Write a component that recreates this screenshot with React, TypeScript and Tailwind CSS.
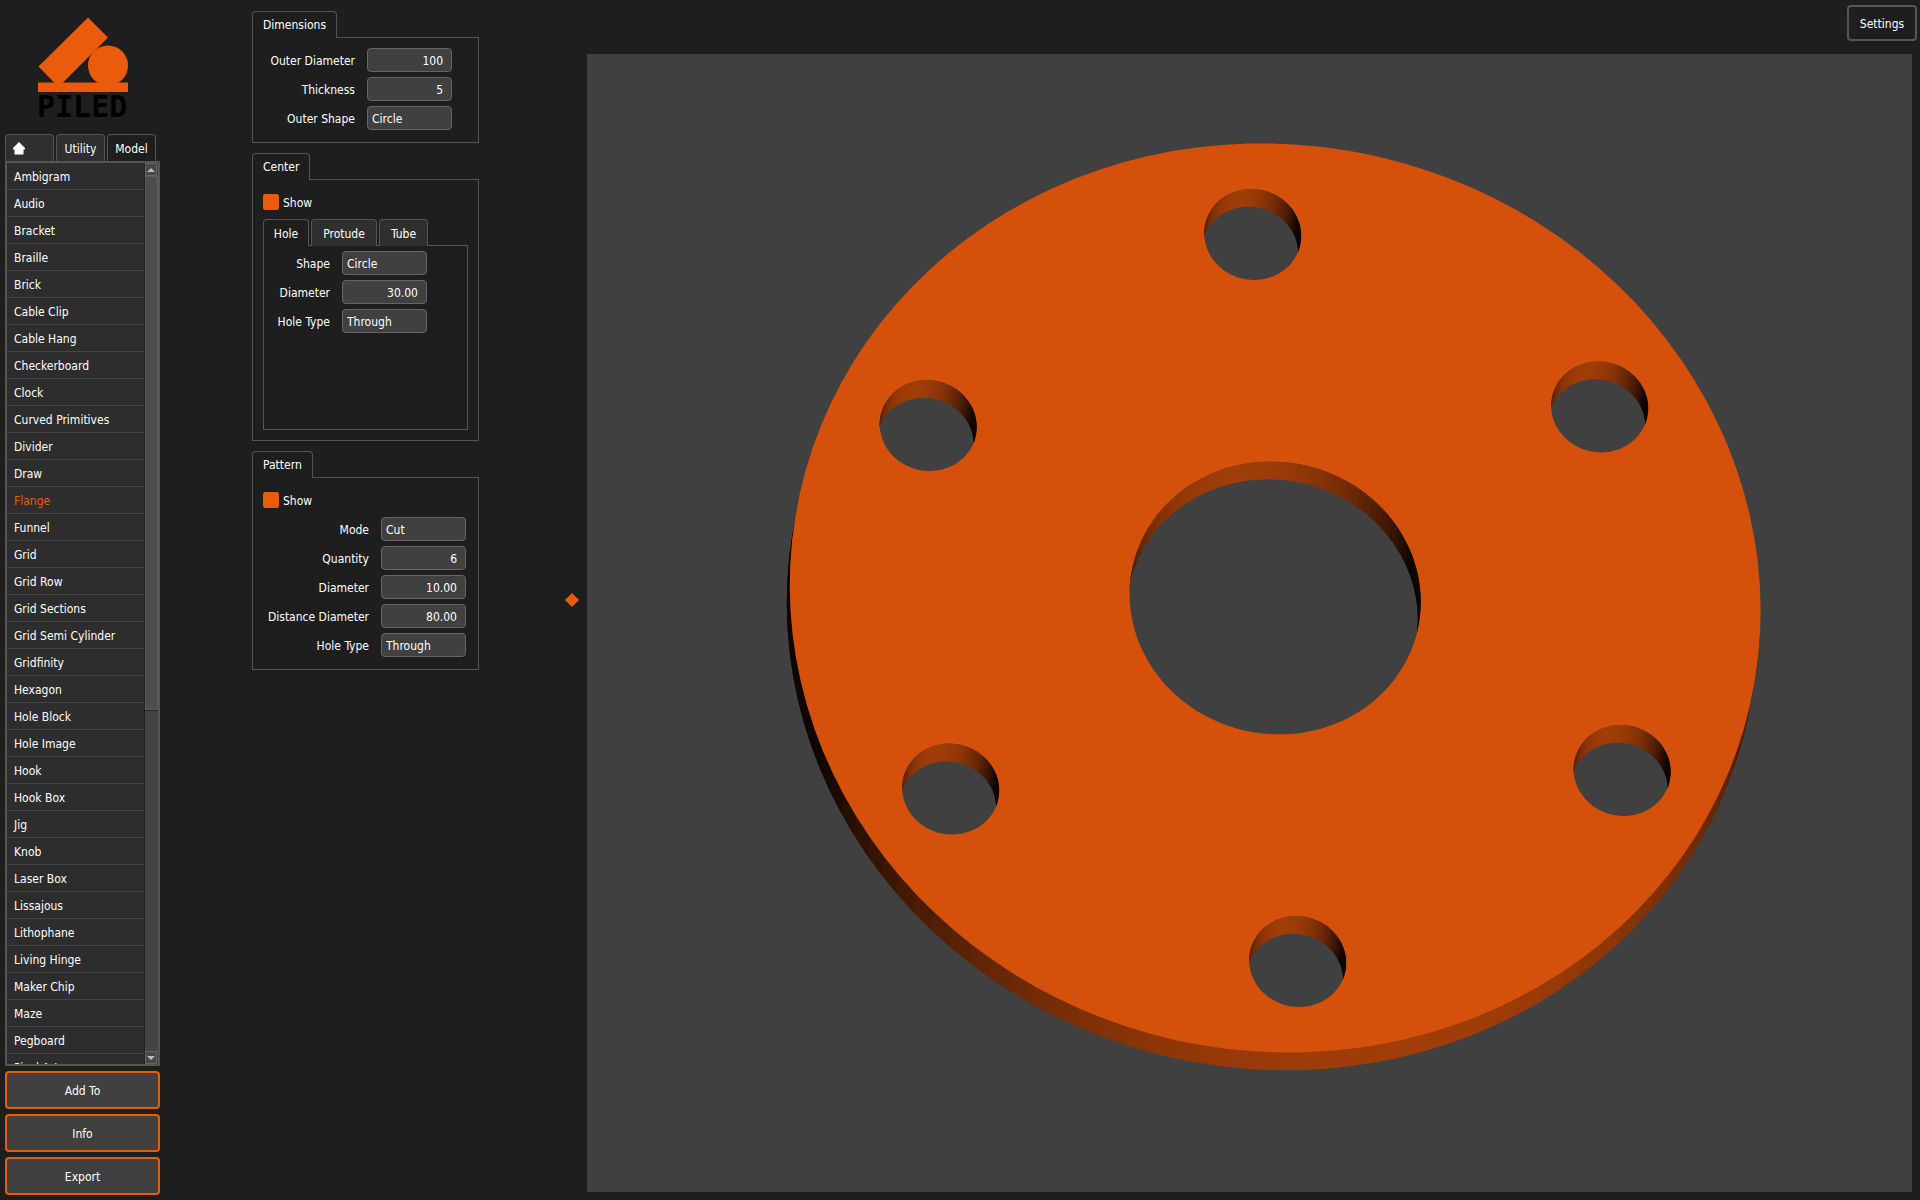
import { useId, useState } from "react";
import type { ReactNode } from "react";

const MODELS = [
    "Ambigram", "Audio", "Bracket", "Braille", "Brick", "Cable Clip", "Cable Hang",
    "Checkerboard", "Clock", "Curved Primitives", "Divider", "Draw", "Flange", "Funnel",
    "Grid", "Grid Row", "Grid Sections", "Grid Semi Cylinder", "Gridfinity", "Hexagon",
    "Hole Block", "Hole Image", "Hook", "Hook Box", "Jig", "Knob", "Laser Box",
    "Lissajous", "Lithophane", "Living Hinge", "Maker Chip", "Maze", "Pegboard", "Pixel Art",
];

// Flange geometry, in model units
const OUTER_RADIUS = 50;
const CENTER_RADIUS = 15;
const BOLT_RADIUS = 5;
const BOLT_DISTANCE = 40;
const SEGMENTS = 120;

type Point = [number, number];

// y points down the screen, depth 1 is the back face
function project(x: number, y: number, depth = 0): Point {
    return [
        688.2 + 9.692 * x + 0.562 * y - 3 * depth,
        544 - 0.268 * x + 9.088 * y + 17.6 * depth,
    ];
}

function toPoints(points: Point[]) {
    return points.map(([x, y]) => `${x.toFixed(2)},${y.toFixed(2)}`).join(" ");
}

function circlePoints(cx: number, cy: number, r: number) {
    return Array.from({ length: SEGMENTS }, (_, i) => {
        const a = (i / SEGMENTS) * Math.PI * 2;
        return project(cx + r * Math.cos(a), cy + r * Math.sin(a));
    });
}

function shade(nx: number, ny: number) {
    const light = Math.max(0.1, nx * 0.208 + ny * 0.978);
    return `rgb(${Math.round(160 * light)}, ${Math.round(61 * light)}, ${Math.round(8 * light)})`;
}

function Wall({ cx, cy, r, inward }: { cx: number; cy: number; r: number; inward?: boolean }) {
    const side = inward ? -1 : 1;

    const at = (step: number, depth: number) => {
        const a = (step / SEGMENTS) * Math.PI * 2;
        return project(cx + r * Math.cos(a), cy + r * Math.sin(a), depth);
    };

    return (
        <>
            {Array.from({ length: SEGMENTS }, (_, i) => {
                const mid = ((i + 0.5) / SEGMENTS) * Math.PI * 2;
                const color = shade(side * Math.cos(mid), side * Math.sin(mid));
                // back of the wall, turned away from the camera
                if (side * (Math.sin(mid) * 17.6 - Math.cos(mid) * 3) < -1) return null;
                // each facet runs under the next one, so no seam shows between them
                return (
                    <polygon
                        key={i}
                        points={toPoints([at(i, 0), at(i + 1, 0), at(i + 2, 0), at(i + 2, 1), at(i + 1, 1), at(i, 1)])}
                        fill={color}
                    />
                );
            })}
        </>
    );
}

function Hole({ cx, cy, r }: { cx: number; cy: number; r: number }) {
    const id = useId();
    const outline = toPoints(circlePoints(cx, cy, r));
    return (
        <>
            <clipPath id={id}>
                <polygon points={outline} />
            </clipPath>
            <polygon points={outline} fill="#404040" />
            <g clipPath={`url(#${id})`}>
                <Wall cx={cx} cy={cy} r={r} inward />
            </g>
        </>
    );
}

function Flange({ quantity }: { quantity: number }) {
    const bolts = Array.from({ length: quantity }, (_, i) => {
        const a = (i / quantity) * Math.PI * 2 - Math.PI / 2;
        return { cx: BOLT_DISTANCE * Math.cos(a), cy: BOLT_DISTANCE * Math.sin(a) };
    });
    return (
        <svg viewBox="0 0 1325 1138" className="w-full h-full" role="img" aria-label="Flange">
            <Wall cx={0} cy={0} r={OUTER_RADIUS} />
            <polygon points={toPoints(circlePoints(0, 0, OUTER_RADIUS))} fill="#d5500b" />
            <Hole cx={0} cy={0} r={CENTER_RADIUS} />
            {bolts.map((bolt, i) => (
                <Hole key={i} cx={bolt.cx} cy={bolt.cy} r={BOLT_RADIUS} />
            ))}
        </svg>
    );
}

function Logo() {
    return (
        <svg width="96" height="116" viewBox="0 0 96 116" role="img" aria-label="Piled">
            <g fill="#ea5b0c">
                <path d="M51 3.500 L71 23.500 L21.500 73 L1.500 52.500 Z" />
                <circle cx="71" cy="51.500" r="20" />
                <rect x="1" y="68.500" width="90" height="9.500" />
            </g>
            <text
                x="0"
                y="102.500"
                fontFamily="'DejaVu Sans Mono', monospace"
                fontWeight="700"
                fontSize="30"
                fill="#000"
            >
                PILED
            </text>
        </svg>
    );
}

function HomeIcon() {
    return (
        <svg width="12" height="13" viewBox="0 0 12 13" fill="#fff" aria-hidden="true">
            <path d="M6 0 L12 6 V7.500 H10.500 V12.500 H1.500 V7.500 H0 V6 Z" />
        </svg>
    );
}

function Group({ title, children }: { title: string; children: ReactNode }) {
    return (
        <section>
            <h2 className="relative z-10 w-fit h-[27px] -mb-px px-[10px] leading-[26px] border border-b-0 border-[#555] rounded-t-[4px] bg-[#1e1e1e]">
                {title}
            </h2>
            <div className="border border-[#555] p-[10px]">{children}</div>
        </section>
    );
}

interface FieldProps {
    label: string;
    value: string;
    options?: string[];
}

function Field({ label, value, options }: FieldProps) {
    const id = useId();
    const box = "w-[85px] h-[24px] pt-[2px] border border-[#666] rounded-[4px] bg-[#404040] appearance-none outline-none";
    return (
        <div className="flex items-center justify-end gap-[12px]">
            <label htmlFor={id} className="pt-[2px]">{label}</label>
            {options ? (
                <select id={id} defaultValue={value} className={`${box} px-[4px]`}>
                    {options.map((o) => <option key={o}>{o}</option>)}
                </select>
            ) : (
                <input id={id} type="text" defaultValue={value} className={`${box} pr-[8px] text-right`} />
            )}
        </div>
    );
}

function ShowCheckbox() {
    return (
        <label className="flex items-center gap-[4px] h-[24px] w-fit">
            <input
                type="checkbox"
                defaultChecked
                className="appearance-none w-[16px] h-[16px] rounded-[2px] border border-[#ea5b0c] checked:bg-[#ea5b0c]"
            />
            <span className="pt-[2px]">Show</span>
        </label>
    );
}

function Tab({ active, onClick, className, label, children }: {
    active: boolean;
    onClick: () => void;
    className: string;
    label?: string;
    children: ReactNode;
}) {
    return (
        <button
            type="button"
            role="tab"
            aria-label={label}
            aria-selected={active}
            onClick={onClick}
            className={`flex items-center border border-b-0 border-[#555] rounded-t-[4px] ${active ? "bg-[#1e1e1e]" : "bg-[#2f2f2f]"} ${className}`}
        >
            {children}
        </button>
    );
}

function ScrollArrow({ down }: { down?: boolean }) {
    return (
        <div className="flex items-center justify-center w-[12px] h-[13px] shrink-0 border border-[#666] bg-[#484848]">
            <svg width="8" height="4" viewBox="0 0 8 4" fill="#bbb" className="shrink-0" aria-hidden="true">
                <path d={down ? "M0 0 H8 L4 4 Z" : "M0 4 H8 L4 0 Z"} />
            </svg>
        </div>
    );
}

function Sidebar() {
    const [tab, setTab] = useState("Model");
    const [selected, setSelected] = useState("Flange");

    return (
        <aside className="flex flex-col w-[165px] shrink-0 p-[5px]">
            <div className="h-[129px] pt-[9px] pl-[32px]">
                <Logo />
            </div>

            <div className="flex gap-[2px] h-[27px]" role="tablist">
                <Tab active={tab === "Home"} onClick={() => setTab("Home")} label="Home" className="w-[49px] pl-[7px]">
                    <HomeIcon />
                </Tab>
                <Tab active={tab === "Utility"} onClick={() => setTab("Utility")} className="w-[49px] pt-[2px] justify-center">
                    Utility
                </Tab>
                <Tab active={tab === "Model"} onClick={() => setTab("Model")} className="w-[49px] pt-[2px] justify-center">
                    Model
                </Tab>
            </div>

            <div className="flex flex-1 min-h-0 border-2 border-[#555] bg-[#2d2d2d]">
                <ul className="flex-1 overflow-hidden">
                    {MODELS.map((name) => (
                        <li key={name} className="h-[27px] border-b border-[#444]">
                            <button
                                type="button"
                                onClick={() => setSelected(name)}
                                className={`w-full h-full pl-[7px] pt-[2px] text-left whitespace-nowrap ${name === selected ? "text-[#ea5b0c]" : ""}`}
                            >
                                {name}
                            </button>
                        </li>
                    ))}
                </ul>
                <div className="flex flex-col w-[14px] border-l border-[#222] bg-[#444]">
                    <ScrollArrow />
                    <div className="flex flex-col flex-1">
                        <div className="h-[61%] border border-[#5c5c5c] bg-[#4d4d4d]" />
                        <div className="h-px bg-[#222]" />
                    </div>
                    <ScrollArrow down />
                </div>
            </div>

            <div className="flex flex-col gap-[5px] pt-[5px]">
                {["Add To", "Info", "Export"].map((name) => (
                    <button
                        key={name}
                        type="button"
                        className="h-[38px] pt-[2px] border-2 border-[#ea5b0c] rounded-[4px] bg-[#404040]"
                    >
                        {name}
                    </button>
                ))}
            </div>
        </aside>
    );
}

function Parameters() {
    const [feature, setFeature] = useState("Hole");

    return (
        <form className="flex flex-col gap-[10px] w-[227px]">
            <Group title="Dimensions">
                <div className="flex flex-col gap-[5px] pr-[16px] pb-[2px]">
                    <Field label="Outer Diameter" value="100" />
                    <Field label="Thickness" value="5" />
                    <Field label="Outer Shape" value="Circle" options={["Circle", "Square"]} />
                </div>
            </Group>

            <Group title="Center">
                <ShowCheckbox />
                <div className="flex gap-[2px] h-[27px] mt-[5px] -mb-px relative" role="tablist">
                    <Tab active={feature === "Hole"} onClick={() => setFeature("Hole")} className="w-[46px] pt-[2px] justify-center">Hole</Tab>
                    <Tab active={feature === "Protude"} onClick={() => setFeature("Protude")} className="w-[66px] pt-[2px] justify-center">Protude</Tab>
                    <Tab active={feature === "Tube"} onClick={() => setFeature("Tube")} className="w-[49px] pt-[2px] justify-center">Tube</Tab>
                </div>
                <div className="flex flex-col gap-[5px] h-[185px] border border-[#555] pt-[5px] pr-[40px]">
                    <Field label="Shape" value="Circle" options={["Circle", "Square"]} />
                    <Field label="Diameter" value="30.00" />
                    <Field label="Hole Type" value="Through" options={["Through", "Blind"]} />
                </div>
            </Group>

            <Group title="Pattern">
                <ShowCheckbox />
                <div className="flex flex-col gap-[5px] pt-[5px] pr-[2px] pb-[2px]">
                    <Field label="Mode" value="Cut" options={["Cut", "Add"]} />
                    <Field label="Quantity" value="6" />
                    <Field label="Diameter" value="10.00" />
                    <Field label="Distance Diameter" value="80.00" />
                    <Field label="Hole Type" value="Through" options={["Through", "Blind"]} />
                </div>
            </Group>
        </form>
    );
}

export default function App() {
    return (
        <div className="flex h-screen bg-[#1e1e1e] text-white text-[12px] leading-[16px] font-['DejaVu_Sans_Condensed','Noto_Sans',sans-serif]">
            <Sidebar />

            <main className="w-[400px] shrink-0 pl-[87px] pt-[11px]">
                <Parameters />
            </main>

            {/* Splitter handle */}
            <div className="flex items-center w-[22px] shrink-0">
                <svg width="14" height="14" viewBox="0 0 14 14" fill="#ea5b0c" aria-hidden="true">
                    <path d="M7 0 L14 7 L7 14 L0 7 Z" />
                </svg>
            </div>

            <div className="flex flex-col flex-1 min-w-0 pb-[8px]">
                <header className="flex justify-end items-start h-[54px] pt-[5px] pr-[3px]">
                    <button type="button" className="w-[70px] h-[36px] pt-[2px] border-2 border-[#555] rounded-[4px]">
                        Settings
                    </button>
                </header>
                <div className="flex-1 min-h-0 mr-[8px] bg-[#404040]">
                    <Flange quantity={6} />
                </div>
            </div>
        </div>
    );
}
